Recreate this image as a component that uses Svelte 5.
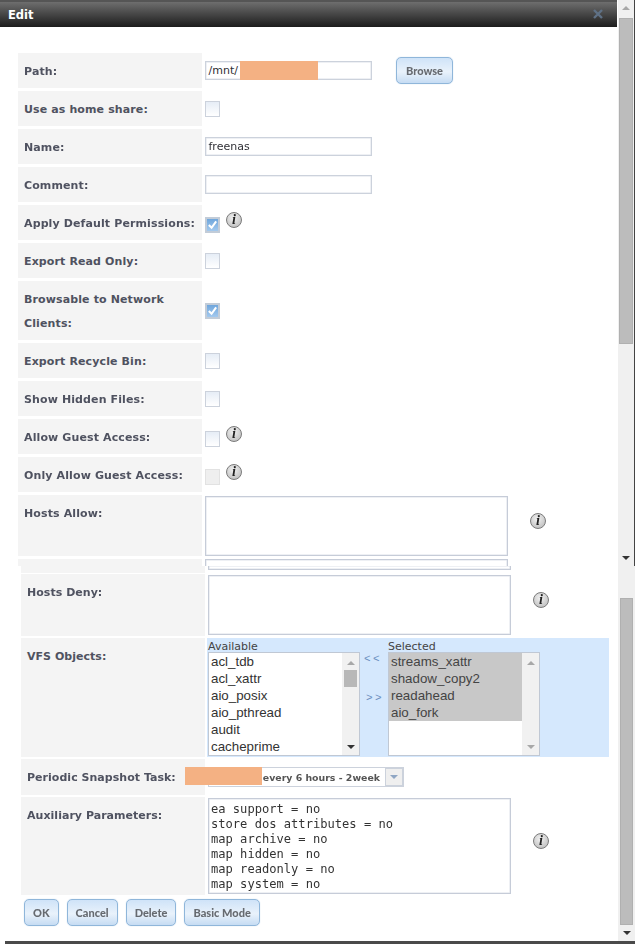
<script>
    const availableVfs = ['acl_tdb', 'acl_xattr', 'aio_posix', 'aio_pthread', 'audit', 'cacheprime'];
    const selectedVfs = ['streams_xattr', 'shadow_copy2', 'readahead', 'aio_fork'];
    const auxLines = ['ea support = no', 'store dos attributes = no', 'map archive = no', 'map hidden = no', 'map readonly = no', 'map system = no'];
    const buttons = ['OK', 'Cancel', 'Delete', 'Basic Mode'];
</script>

{#snippet info()}
    <span class="info"><span>i</span></span>
{/snippet}

{#snippet checkbox(state)}
    <span class="check {state}">
        {#if state === 'on'}
            <svg viewBox="0 0 12 12" width="12" height="12"><path d="M2 6l3 3 5-7" fill="none" stroke="#fff" stroke-width="2.2"/></svg>
        {/if}
    </span>
{/snippet}

{#snippet arrow(dir, dark)}
    <span class="arrow {dir}" class:dark></span>
{/snippet}

<div class="page">
    <div class="upper">
        <div class="dialog">
            <div class="title">
                <span>Edit</span>
                <svg class="close" viewBox="0 0 10 10" width="10" height="10"><path d="M1 1l8 8M9 1l-8 8" stroke="#5f7186" stroke-width="2.4"/></svg>
            </div>
            <div class="form">
                <div class="row">
                    <div class="label">Path:</div>
                    <div class="field">
                        <span class="input mask-host">/mnt/<span class="mask path-mask"></span></span>
                        <button class="btn browse">Browse</button>
                    </div>
                </div>
                <div class="row"><div class="label">Use as home share:</div><div class="field">{@render checkbox('off')}</div></div>
                <div class="row"><div class="label">Name:</div><div class="field"><span class="input">freenas</span></div></div>
                <div class="row"><div class="label">Comment:</div><div class="field"><span class="input"></span></div></div>
                <div class="row"><div class="label">Apply Default Permissions:</div><div class="field low">{@render checkbox('on')}{@render info()}</div></div>
                <div class="row"><div class="label">Export Read Only:</div><div class="field">{@render checkbox('off')}</div></div>
                <div class="row tall"><div class="label">Browsable to Network Clients:</div><div class="field">{@render checkbox('on')}</div></div>
                <div class="row"><div class="label">Export Recycle Bin:</div><div class="field">{@render checkbox('off')}</div></div>
                <div class="row"><div class="label">Show Hidden Files:</div><div class="field">{@render checkbox('off')}</div></div>
                <div class="row"><div class="label">Allow Guest Access:</div><div class="field low">{@render checkbox('off')}{@render info()}</div></div>
                <div class="row"><div class="label">Only Allow Guest Access:</div><div class="field low">{@render checkbox('disabled')}{@render info()}</div></div>
                <div class="row hosts">
                    <div class="label">Hosts Allow:</div>
                    <div class="field"><span class="area"></span><span class="info-gap">{@render info()}</span></div>
                </div>
                <div class="row"><div class="label"></div><div class="field top"><span class="area"></span></div></div>
            </div>
        </div>
        <div class="scrollbar">
            <div class="sb-btn">{@render arrow('up', false)}</div>
            <div class="sb-thumb top-thumb"></div>
            <div class="sb-rest"></div>
            <div class="sb-btn">{@render arrow('down', true)}</div>
        </div>
    </div>

    <div class="lower">
        <div class="dialog">
            <div class="row stub"><div class="label"></div><div class="field top"><span class="area stub-area"></span></div></div>
            <div class="row hosts deny">
                <div class="label">Hosts Deny:</div>
                <div class="field"><span class="area"></span><span class="info-gap">{@render info()}</span></div>
            </div>
            <div class="row vfs">
                <div class="label">VFS Objects:</div>
                <div class="vfs-cell">
                    <div class="vfs-col">
                        <div class="cap">Available</div>
                        <div class="list">
                            <div class="items">
                                {#each availableVfs as item}<div class="item">{item}</div>{/each}
                            </div>
                            <div class="list-sb">
                                {@render arrow('up', false)}
                                <div class="list-thumb"></div>
                                {@render arrow('down', true)}
                            </div>
                        </div>
                    </div>
                    <div class="movers"><span>&lt;&lt;</span><span class="right">&gt;&gt;</span></div>
                    <div class="vfs-col">
                        <div class="cap">Selected</div>
                        <div class="list">
                            <div class="items">
                                {#each selectedVfs as item}<div class="item picked">{item}</div>{/each}
                            </div>
                            <div class="list-sb">
                                {@render arrow('up', false)}
                                {@render arrow('down', false)}
                            </div>
                        </div>
                    </div>
                </div>
            </div>
            <div class="row snap">
                <div class="label">Periodic Snapshot Task:</div>
                <div class="field">
                    <span class="select"><span class="select-text">every 6 hours - 2week</span><span class="select-btn">{@render arrow('down', false)}</span></span>
                </div>
                <span class="mask snap-mask"></span>
            </div>
            <div class="row aux">
                <div class="label">Auxiliary Parameters:</div>
                <div class="field">
                    <div class="area aux-area">
                        {#each auxLines as line}<div>{line}</div>{/each}
                    </div>
                    <span class="info-gap">{@render info()}</span>
                </div>
            </div>
            <div class="actions">
                {#each buttons as b}<button class="btn">{b}</button>{/each}
            </div>
        </div>
        <div class="scrollbar">
            <div class="sb-spacer"></div>
            <div class="sb-thumb low-thumb"></div>
            <div class="sb-btn">{@render arrow('down', true)}</div>
        </div>
    </div>
    <div class="footer"></div>
</div>

<style>
    :global(body) {
        background: #fff;
    }
    .page {
        width: 635px;
        height: 944px;
        overflow: hidden;
        display: flex;
        flex-direction: column;
        font-family: "DejaVu Sans", sans-serif;
        color: #4f5260;
        filter: blur(0.3px);
    }
    .upper {
        height: 566px;
        display: flex;
        flex: none;
        overflow: hidden;
    }
    .lower {
        flex: 1;
        min-height: 0;
        margin-left: 5px;
        display: flex;
    }
    .footer {
        height: 3px;
        flex: none;
        margin-left: 5px;
        background: #4a4a4a;
    }
    .dialog {
        flex: 1;
        min-width: 0;
        overflow: hidden;
    }
    .title {
        height: 27px;
        display: flex;
        align-items: center;
        justify-content: space-between;
        padding: 0 14px 0 8px;
        box-sizing: border-box;
        background: linear-gradient(#6e6e6e, #1c1c1c);
        border-top: 2px solid #555;
        color: #fff;
        font-weight: bold;
        font-size: 11.5px;
    }
    .close {
        margin-top: -2px;
    }
    .form {
        padding: 26px 0 0 18px;
    }
    .lower .dialog {
        padding-left: 16px;
    }
    .row {
        display: flex;
        height: 35px;
        margin-bottom: 3px;
        position: relative;
    }
    .row.tall {
        height: 59px;
    }
    .row.hosts {
        height: 61px;
    }
    .row.stub {
        height: 6px;
        margin-bottom: 2px;
    }
    .row.deny {
        height: 62px;
        margin-bottom: 2px;
    }
    .row.vfs {
        height: 119px;
        margin-bottom: 2px;
    }
    .row.snap {
        height: 36px;
        margin-bottom: 2px;
    }
    .row.aux {
        height: 98px;
        margin-bottom: 4px;
    }
    .label {
        width: 184px;
        flex: none;
        box-sizing: border-box;
        padding: 7px 6px 0;
        background: #f4f4f4;
        font-size: 11px;
        font-weight: bold;
        letter-spacing: 0.12px;
        line-height: 24px;
    }
    .lower .label {
        letter-spacing: 0.03px;
    }
    .field {
        display: flex;
        align-items: center;
        padding-left: 3px;
        flex: 1;
        color: #333;
    }
    .field.low {
        align-items: flex-start;
    }
    .field.low .check {
        margin-top: 12px;
    }
    .field.low .info {
        margin: 7px 0 0 6px;
    }
    .field.top {
        align-items: flex-start;
    }
    .input {
        position: relative;
        width: 167px;
        height: 19px;
        box-sizing: border-box;
        border: 1px solid #ccd2dc;
        box-shadow: inset 0 0 0 0.5px #dde2ea;
        background: #fff;
        padding-left: 2.5px;
        font-size: 11px;
        line-height: 18px;
        color: #2f2f35;
        display: block;
    }
    .mask {
        position: absolute;
        background: #f4b183;
    }
    .path-mask {
        left: 34px;
        top: -1px;
        width: 78px;
        height: 19px;
    }
    .snap-mask {
        left: 164px;
        top: 8px;
        width: 77px;
        height: 18px;
    }
    .browse {
        margin-left: 24px;
        min-width: 57px;
    }
    .btn {
        height: 27px;
        padding: 0 8px;
        box-sizing: border-box;
        border: 1px solid #8fb6da;
        border-radius: 5px;
        background: linear-gradient(#cfe3f8, #e9f2fb 55%, #c6dcf3);
        box-shadow: 0 0 1px #aac6e2;
        font-family: Lato, sans-serif;
        font-weight: 900;
        font-size: 11px;
        color: #666a70;
    }
    .check {
        width: 15px;
        height: 16px;
        box-sizing: border-box;
        border: 1px solid #ccd2dc;
        background: linear-gradient(#e6edf6, #fff);
        display: flex;
        align-items: center;
        justify-content: center;
        flex: none;
    }
    .check.on {
        background: linear-gradient(#6fa6dc, #a3c9ee);
        border: 2px solid #c2ccd8;
    }
    .check.disabled {
        background: #efefef;
        border-color: #e2e2e2;
    }
    .info {
        width: 16px;
        height: 16px;
        box-sizing: border-box;
        border-radius: 50%;
        border: 1px solid #7a7a7a;
        background: radial-gradient(circle at 45% 35%, #f2f2f2, #b5b5b5);
        display: flex;
        align-items: center;
        justify-content: center;
        flex: none;
        font: italic bold 14px/14px "Liberation Serif", serif;
        color: #222;
    }
    .area {
        display: block;
        width: 303px;
        height: 60px;
        box-sizing: border-box;
        border: 1px solid #c6ccd8;
        box-shadow: inset 0 0 0 0.5px #dde2ea;
        background: #fff;
    }
    .stub-area {
        height: 4px;
        border-top: 0;
        width: 303px;
    }
    .info-gap {
        margin: -10px 0 0 22px;
    }
    .vfs-cell {
        width: 401px;
        margin-left: 2px;
        background: #d5e8fd;
        display: flex;
        padding-left: 1px;
    }
    .vfs-col {
        width: 152px;
        flex: none;
    }
    .cap {
        height: 14px;
        font-size: 11px;
        line-height: 17px;
        color: #444;
    }
    .list {
        height: 104px;
        box-sizing: border-box;
        border: 1px solid #c0c8d4;
        background: #fff;
        display: flex;
    }
    .items {
        flex: 1;
        font-family: "Liberation Sans", sans-serif;
        font-size: 13.33px;
        color: #333;
    }
    .item {
        height: 17px;
        line-height: 17px;
        padding-left: 2px;
    }
    .item.picked {
        background: #c8c8c8;
        color: #444;
    }
    .list-sb {
        width: 17px;
        flex: none;
        background: #f1f1f1;
        display: flex;
        flex-direction: column;
        align-items: center;
        justify-content: space-between;
        padding: 8px 0 6px;
        box-sizing: border-box;
        position: relative;
    }
    .list-thumb {
        position: absolute;
        left: 2px;
        top: 17px;
        width: 13px;
        height: 17px;
        background: #b8b8b8;
    }
    .movers {
        width: 28px;
        flex: none;
        display: flex;
        flex-direction: column;
        font-family: "Liberation Mono", monospace;
        font-size: 11px;
        letter-spacing: 2.5px;
        color: #6b8fc0;
        padding: 15px 0 0 4px;
        box-sizing: border-box;
        gap: 27px;
    }
    .movers .right {
        padding-left: 2px;
    }
    .select {
        width: 196px;
        height: 20px;
        box-sizing: border-box;
        border: 1px solid #ccd2dc;
        background: #fff;
        display: flex;
        align-items: center;
        justify-content: flex-end;
    }
    .select-text {
        font-size: 9.4px;
        font-weight: bold;
        color: #555;
        margin-right: 5px;
    }
    .select-btn {
        width: 18px;
        height: 18px;
        box-sizing: border-box;
        border: 1px solid #ccd2dc;
        background: #efefef;
        display: flex;
        align-items: center;
        justify-content: center;
    }
    .aux-area {
        height: 96px;
        padding: 3px 2px;
        font-family: "DejaVu Sans Mono", monospace;
        font-size: 12.1px;
        line-height: 15px;
        color: #333;
    }
    .actions {
        display: flex;
        gap: 8px;
        padding-left: 3px;
    }
    .scrollbar {
        width: 18px;
        flex: none;
        display: flex;
        flex-direction: column;
        box-sizing: border-box;
        background: #f0f0f0;
        border-left: 1px solid #fff;
    }
    .upper .scrollbar {
        border-right: 1px solid #444;
    }
    .sb-btn {
        height: 16px;
        flex: none;
        display: flex;
        align-items: center;
        justify-content: center;
    }
    .sb-thumb {
        margin: 0 1px;
        background: #bcbcbc;
        border: 1px solid #b0b0b0;
        box-sizing: border-box;
    }
    .top-thumb {
        height: 326px;
        margin-top: 2px;
    }
    .low-thumb {
        flex: 1;
        margin-left: 2px;
        margin-right: 2px;
    }
    .sb-rest {
        flex: 1;
    }
    .sb-spacer {
        height: 32px;
        flex: none;
    }
    .arrow {
        width: 0;
        height: 0;
        border-left: 4px solid transparent;
        border-right: 4px solid transparent;
        display: block;
    }
    .arrow.up {
        border-bottom: 4px solid #a8a8a8;
    }
    .arrow.down {
        border-top: 4px solid #a8a8a8;
    }
    .arrow.down.dark {
        border-top-color: #333;
    }
    .select-btn .arrow.down {
        border-top-color: #8fa6c4;
    }
</style>
